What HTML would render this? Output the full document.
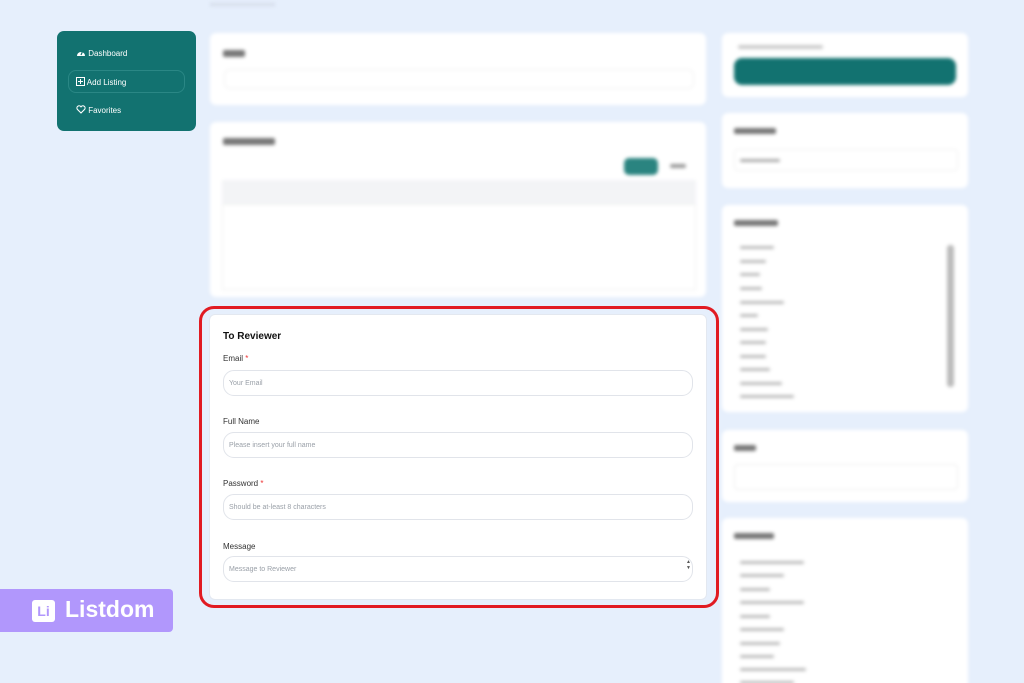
<!DOCTYPE html>
<html style="height:683px;overflow:hidden"><head><meta charset="utf-8"><style>
*{box-sizing:border-box;margin:0;padding:0}
body{width:1024px;height:683px;overflow:hidden;background:#e6effc;font-family:"Liberation Sans",sans-serif;position:relative}
.a{position:absolute}
.blur{filter:blur(1.8px)}
.card{position:absolute;background:#fff;border-radius:6px}
.bar{position:absolute;background:#bbb;height:4px;border-radius:2px}
.in{position:absolute;left:13px;right:13px;height:26px;border:1px solid #e1e4ea;border-radius:11px;font-size:7px;color:#9aa0a8;padding:9px 5px}
.lbl{position:absolute;left:13px;font-size:8px;color:#333}
.lbl b{color:#e33;font-weight:normal}
</style></head><body>
<div class="blur">
<div class="a" style="left:210px;top:3px;width:65px;height:3px;background:#d5dcea"></div>
<div class="card" style="left:210px;top:33px;width:496px;height:72px">
 <div class="bar" style="left:13px;top:17px;width:22px;height:7px;background:#777"></div>
 <div class="a" style="left:14px;top:36px;width:470px;height:20px;border:1px solid #f0f0f0;border-radius:6px"></div>
</div>
<div class="card" style="left:210px;top:122px;width:496px;height:175px">
 <div class="bar" style="left:13px;top:16px;width:52px;height:7px;background:#777"></div>
 <div class="a" style="left:414px;top:36px;width:34px;height:17px;background:#2a8480;border-radius:5px"></div>
 <div class="bar" style="left:460px;top:42px;width:16px;height:4px;background:#999"></div>
 <div class="a" style="left:12px;top:58px;width:474px;height:24px;background:#f3f4f6"></div>
 <div class="a" style="left:12px;top:82px;width:474px;height:86px;border:1px solid #f0f0f0"></div>
</div>
<div class="card" style="left:722px;top:33px;width:246px;height:64px">
 <div class="bar" style="left:16px;top:12px;width:85px;height:4px;background:#ccc"></div>
 <div class="a" style="left:12px;top:25px;width:222px;height:27px;background:#127270;border-radius:8px"></div>
</div>
<div class="card" style="left:722px;top:113px;width:246px;height:75px">
 <div class="bar" style="left:12px;top:15px;width:42px;height:6px;background:#777"></div>
 <div class="a" style="left:12px;top:36px;width:224px;height:22px;border:1px solid #f0f0f0;border-radius:4px"></div>
 <div class="bar" style="left:18px;top:46px;width:40px;height:3px;background:#aaa"></div>
</div>
<div class="card" style="left:722px;top:205px;width:246px;height:207px">
 <div class="bar" style="left:12px;top:15px;width:44px;height:6px;background:#777"></div>
 <div class="a" style="left:225px;top:40px;width:7px;height:142px;background:#bbb;border-radius:3px"></div>
 <div class="bar" style="left:18px;top:41px;width:34px;height:3px"></div>
 <div class="bar" style="left:18px;top:55px;width:26px;height:3px"></div>
 <div class="bar" style="left:18px;top:68px;width:20px;height:3px"></div>
 <div class="bar" style="left:18px;top:82px;width:22px;height:3px"></div>
 <div class="bar" style="left:18px;top:96px;width:44px;height:3px"></div>
 <div class="bar" style="left:18px;top:109px;width:18px;height:3px"></div>
 <div class="bar" style="left:18px;top:123px;width:28px;height:3px"></div>
 <div class="bar" style="left:18px;top:136px;width:26px;height:3px"></div>
 <div class="bar" style="left:18px;top:150px;width:26px;height:3px"></div>
 <div class="bar" style="left:18px;top:163px;width:30px;height:3px"></div>
 <div class="bar" style="left:18px;top:177px;width:42px;height:3px"></div>
 <div class="bar" style="left:18px;top:190px;width:54px;height:3px"></div>
</div>
<div class="card" style="left:722px;top:430px;width:246px;height:72px">
 <div class="bar" style="left:12px;top:15px;width:22px;height:6px;background:#777"></div>
 <div class="a" style="left:12px;top:34px;width:224px;height:26px;border:1px solid #eee;border-radius:4px"></div>
</div>
<div class="card" style="left:722px;top:518px;width:246px;height:175px">
 <div class="bar" style="left:12px;top:15px;width:40px;height:6px;background:#777"></div>
 <div class="bar" style="left:18px;top:43px;width:64px;height:3px"></div>
 <div class="bar" style="left:18px;top:56px;width:44px;height:3px"></div>
 <div class="bar" style="left:18px;top:70px;width:30px;height:3px"></div>
 <div class="bar" style="left:18px;top:83px;width:64px;height:3px"></div>
 <div class="bar" style="left:18px;top:97px;width:30px;height:3px"></div>
 <div class="bar" style="left:18px;top:110px;width:44px;height:3px"></div>
 <div class="bar" style="left:18px;top:124px;width:40px;height:3px"></div>
 <div class="bar" style="left:18px;top:137px;width:34px;height:3px"></div>
 <div class="bar" style="left:18px;top:150px;width:66px;height:3px"></div>
 <div class="bar" style="left:18px;top:163px;width:54px;height:3px"></div>
</div>
</div>

<div class="a" style="left:57px;top:31px;width:139px;height:100px;background:#127270;border-radius:7px;color:#fff;font-size:8px">
 <div class="a" style="left:19px;top:17px">
  <svg width="10" height="9" viewBox="0 0 10 9" style="vertical-align:-1px"><path d="M1 8A4 4 0 1 1 9 8Z" fill="#fff"/><path d="M5 7L6.5 3.5" stroke="#127270" stroke-width="1.2"/></svg> Dashboard</div>
 <div class="a" style="left:11px;top:39px;width:117px;height:23px;border:1px solid #2a8785;border-radius:8px"></div>
 <div class="a" style="left:19px;top:46px"><svg width="9" height="9" viewBox="0 0 9 9" style="vertical-align:-1px"><rect x=".5" y=".5" width="8" height="8" fill="none" stroke="#fff"/><path d="M4.5 2v5M2 4.5h5" stroke="#fff"/></svg> Add Listing</div>
 <div class="a" style="left:19px;top:74px"><svg width="10" height="9" viewBox="0 0 10 9" style="vertical-align:-1px"><path d="M5 8L1.3 4.3A2.2 2.2 0 0 1 5 1.8A2.2 2.2 0 0 1 8.7 4.3Z" fill="none" stroke="#fff" stroke-width="1.1"/></svg> Favorites</div>
</div>

<div class="card" style="left:209px;top:314px;width:498px;height:286px;border:1px solid #e3e8f0">
 <div class="a" style="left:13px;top:16px;font-size:10px;font-weight:bold;color:#111">To Reviewer</div>
 <div class="lbl" style="top:39px">Email <b>*</b></div>
 <div class="in" style="top:55px">Your Email</div>
 <div class="lbl" style="top:102px">Full Name</div>
 <div class="in" style="top:117px">Please insert your full name</div>
 <div class="lbl" style="top:164px">Password <b>*</b></div>
 <div class="in" style="top:179px">Should be at-least 8 characters</div>
 <div class="lbl" style="top:227px">Message</div>
 <div class="in" style="top:241px">Message to Reviewer</div>
 <div class="a" style="left:476px;top:244px;font-size:5px;color:#555;line-height:6px">▲<br>▼</div>
</div>
<div class="a" style="left:199px;top:306px;width:520px;height:302px;border:3px solid #e11b22;border-radius:15px"></div>

<div class="a" style="left:0;top:589px;width:173px;height:43px;background:#b197fc;border-radius:0 4px 4px 0"></div>
<div class="a" style="left:32px;top:600px;width:23px;height:22px;background:#fff;border-radius:3px;color:#b197fc;font-weight:bold;font-size:14px;text-align:center;line-height:22px">Li</div>
<div class="a" style="left:65px;top:596px;color:#fff;font-size:23px;font-weight:bold">Listdom</div>
</body></html>
